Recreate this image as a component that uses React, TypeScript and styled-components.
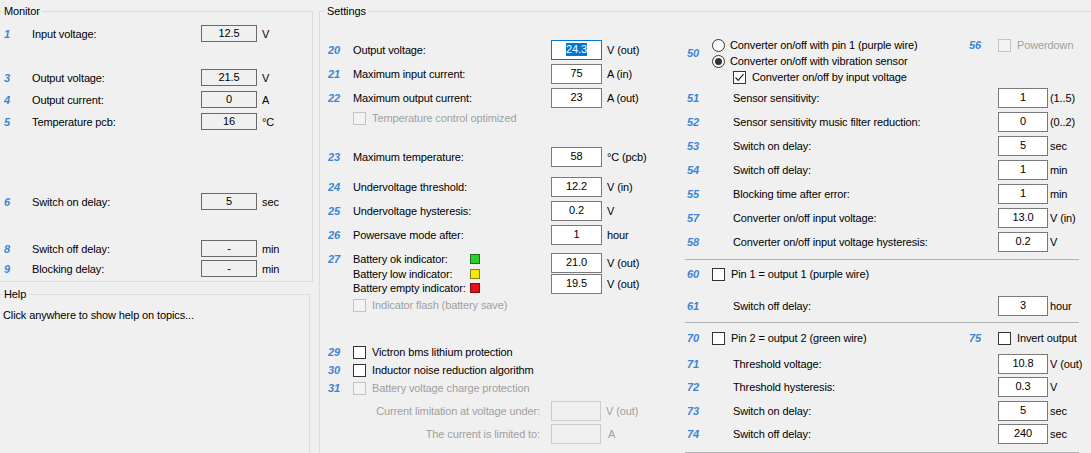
import React from 'react';
import styled, { createGlobalStyle } from 'styled-components';

const GlobalStyle = createGlobalStyle`
  html, body { margin: 0; padding: 0; background: #f0f0f0; }
  body {
    font-family: "Liberation Sans", Arial, sans-serif;
    font-size: 11px;
    letter-spacing: -0.12px;
    color: #000;
  }
  * { box-sizing: border-box; }
`;

const Page = styled.div`
  display: flex;
  width: 1091px;
  height: 453px;
  overflow: hidden;
  padding-top: 4px;
`;

const LeftColumn = styled.div`
  width: 313px;
  flex-shrink: 0;
  display: flex;
  flex-direction: column;
`;

const Group = styled.fieldset<{ $w: number; $h: number; $ml?: number; $mt?: number }>`
  margin: ${p => p.$mt ?? 0}px 0 0 ${p => p.$ml ?? 0}px;
  padding: 0;
  width: ${p => p.$w}px;
  height: ${p => p.$h}px;
  min-width: 0;
  flex-shrink: 0;
  border: 1px solid #dcdcdc;
`;

const Legend = styled.legend`
  margin-left: 5px;
  padding: 0 2px;
  line-height: 14px;
  font-size: 11px;
`;

const MonitorBody = styled.div`
  padding-left: 7px;
`;

const HelpBody = styled.div`
  padding: 7px 0 0 6px;
  line-height: 14px;
`;

const SettingsBody = styled.div`
  display: flex;
`;

const MiddleColumn = styled.div`
  width: 360px;
  flex-shrink: 0;
  display: flex;
  flex-direction: column;
`;

const RightColumn = styled.div`
  width: 400px;
  flex-shrink: 0;
  display: flex;
  flex-direction: column;
`;

const Num = styled.span`
  font-weight: bold;
  font-style: italic;
  font-size: 11px;
  letter-spacing: 0;
  color: #3a86d4;
  white-space: nowrap;
`;

const Text = styled.span<{ $disabled?: boolean; $indent?: number; $right?: boolean }>`
  color: ${p => (p.$disabled ? '#a0a0a0' : '#000')};
  white-space: nowrap;
  padding-left: ${p => p.$indent ?? 0}px;
  padding-right: ${p => (p.$right ? 11 : 0)}px;
  text-align: ${p => (p.$right ? 'right' : 'left')};
`;

const Unit = styled.span<{ $gap: number; $disabled?: boolean }>`
  margin-left: ${p => p.$gap}px;
  color: ${p => (p.$disabled ? '#a0a0a0' : '#000')};
  white-space: nowrap;
`;

const FieldRow = styled.div<{
  $numW: number;
  $labelW: number;
  $fieldW: number;
  $h: number;
  $pad: number;
  $mt: number;
}>`
  display: grid;
  grid-template-columns: ${p => `${p.$numW}px ${p.$labelW}px ${p.$fieldW}px auto`};
  align-items: center;
  height: ${p => p.$h}px;
  padding-left: ${p => p.$pad}px;
  margin-top: ${p => p.$mt}px;
  flex-shrink: 0;
`;

type FieldKind = 'monitor' | 'edit' | 'focus' | 'disabled';

const borderColors: Record<FieldKind, string> = {
  monitor: '#6a6a6a',
  edit: '#7a7a7a',
  focus: '#0078d7',
  disabled: '#cccccc',
};

const FieldBox = styled.div<{ $kind: FieldKind; $h: number }>`
  height: ${p => p.$h}px;
  line-height: ${p => p.$h - 3}px;
  border: 1px solid ${p => borderColors[p.$kind]};
  background: ${p => (p.$kind === 'monitor' || p.$kind === 'disabled' ? '#f0f0f0' : '#ffffff')};
  text-align: center;
  white-space: nowrap;
  overflow: hidden;
`;

const Selection = styled.span`
  display: inline-block;
  line-height: 13px;
  background: #0078d7;
  color: #fff;
`;

const CheckRow = styled.div<{ $pad: number; $mt: number }>`
  display: grid;
  grid-template-columns: 25px auto;
  align-items: center;
  height: 14px;
  padding-left: ${p => p.$pad}px;
  margin-top: ${p => p.$mt}px;
  flex-shrink: 0;
`;

const SplitRow = styled.div<{ $mt: number }>`
  display: grid;
  grid-template-columns: 25px 257px 29px auto;
  align-items: center;
  height: 14px;
  padding-left: 7px;
  margin-top: ${p => p.$mt}px;
  flex-shrink: 0;
`;

const Option = styled.label<{ $gap: number; $indent?: number }>`
  display: flex;
  align-items: center;
  gap: ${p => p.$gap}px;
  padding-left: ${p => p.$indent ?? 0}px;
  white-space: nowrap;
`;

const Box = styled.span<{ $disabled?: boolean }>`
  width: 13px;
  height: 13px;
  flex-shrink: 0;
  display: inline-flex;
  align-items: center;
  justify-content: center;
  border: 1px solid ${p => (p.$disabled ? '#c4c4c4' : '#333333')};
  background: ${p => (p.$disabled ? '#f3f3f3' : '#ffffff')};
`;

const RadioCircle = styled.span<{ $on?: boolean }>`
  width: 13px;
  height: 13px;
  flex-shrink: 0;
  border-radius: 50%;
  border: 1px solid #333333;
  background: #fff;
  display: inline-flex;
  align-items: center;
  justify-content: center;
  &::after {
    content: '';
    width: 7px;
    height: 7px;
    border-radius: 50%;
    background: ${p => (p.$on ? '#333333' : 'transparent')};
  }
`;

const RadioBlock = styled.div<{ $mt: number }>`
  display: grid;
  grid-template-columns: 25px auto;
  grid-template-rows: 16px 16px 16px;
  align-items: center;
  padding-left: 7px;
  margin-top: ${p => p.$mt}px;
  flex-shrink: 0;
  & > :not(:first-child) {
    grid-column: 2;
  }
`;

const SpanNum = styled(Num)`
  grid-column: 1;
  grid-row: 1 / span 2;
  align-self: center;
`;

const RadioLine = styled.div`
  display: grid;
  grid-template-columns: 257px 29px auto;
  align-items: center;
`;

const BatteryBlock = styled.div<{ $mt: number }>`
  display: grid;
  grid-template-columns: 25px 198px auto;
  align-items: start;
  height: 44px;
  padding-left: 8px;
  margin-top: ${p => p.$mt}px;
  flex-shrink: 0;
`;

const BlockNum = styled(Num)`
  line-height: 14.5px;
`;

const IndicatorList = styled.div`
  display: flex;
  flex-direction: column;
`;

const IndicatorLine = styled.div`
  display: grid;
  grid-template-columns: 117px 10px;
  align-items: center;
  height: 14.5px;
`;

const Lamp = styled.span<{ $fill: string; $edge: string }>`
  width: 10px;
  height: 10px;
  background: ${p => p.$fill};
  border: 1px solid ${p => p.$edge};
`;

const FieldStack = styled.div`
  display: flex;
  flex-direction: column;
  gap: 1px;
  padding-top: 1px;
`;

const FieldLine = styled.div`
  display: grid;
  grid-template-columns: 51px auto;
  align-items: center;
`;

const Separator = styled.div<{ $mt: number }>`
  margin: ${p => p.$mt}px 0 0 5px;
  width: 394px;
  height: 1px;
  background: #b4b4b4;
  flex-shrink: 0;
`;

const CheckMark = () => (
  <svg width="11" height="11" viewBox="0 0 11 11">
    <polyline points="1.5,5.5 4.2,8.3 9.5,2.2" fill="none" stroke="#222" strokeWidth="1.2" />
  </svg>
);

const CheckBox = ({ checked, disabled }: { checked?: boolean; disabled?: boolean }) => (
  <Box $disabled={disabled}>{checked ? <CheckMark /> : null}</Box>
);

const monitorRows = [
  { n: '1', label: 'Input voltage:', value: '12.5', unit: 'V', mt: 7 },
  { n: '3', label: 'Output voltage:', value: '21.5', unit: 'V', mt: 27 },
  { n: '4', label: 'Output current:', value: '0', unit: 'A', mt: 5 },
  { n: '5', label: 'Temperature pcb:', value: '16', unit: '°C', mt: 5 },
  { n: '6', label: 'Switch on delay:', value: '5', unit: 'sec', mt: 63 },
  { n: '8', label: 'Switch off delay:', value: '-', unit: 'min', mt: 30 },
  { n: '9', label: 'Blocking delay:', value: '-', unit: 'min', mt: 3 },
];

const midRows = [
  { n: '21', label: 'Maximum input current:', value: '75', unit: 'A (in)', mt: 4 },
  { n: '22', label: 'Maximum output current:', value: '23', unit: 'A (out)', mt: 4 },
];

const midRows2 = [
  { n: '23', label: 'Maximum temperature:', value: '58', unit: '°C (pcb)', mt: 22 },
  { n: '24', label: 'Undervoltage threshold:', value: '12.2', unit: 'V (in)', mt: 10 },
  { n: '25', label: 'Undervoltage hysteresis:', value: '0.2', unit: 'V', mt: 4 },
  { n: '26', label: 'Powersave mode after:', value: '1', unit: 'hour', mt: 4 },
];

const rightRows = [
  { n: '51', label: 'Sensor sensitivity:', value: '1', unit: '(1..5)', mt: 3 },
  { n: '52', label: 'Sensor sensitivity music filter reduction:', value: '0', unit: '(0..2)', mt: 4 },
  { n: '53', label: 'Switch on delay:', value: '5', unit: 'sec', mt: 4 },
  { n: '54', label: 'Switch off delay:', value: '1', unit: 'min', mt: 4 },
  { n: '55', label: 'Blocking time after error:', value: '1', unit: 'min', mt: 4 },
  { n: '57', label: 'Converter on/off input voltage:', value: '13.0', unit: 'V (in)', mt: 4 },
  { n: '58', label: 'Converter on/off input voltage hysteresis:', value: '0.2', unit: 'V', mt: 4 },
];

const pin2Rows = [
  { n: '71', label: 'Threshold voltage:', value: '10.8', unit: 'V (out)', mt: 9 },
  { n: '72', label: 'Threshold hysteresis:', value: '0.3', unit: 'V', mt: 3 },
  { n: '73', label: 'Switch on delay:', value: '5', unit: 'sec', mt: 4 },
  { n: '74', label: 'Switch off delay:', value: '240', unit: 'sec', mt: 3 },
];

type RowData = { n: string; label: string; value: string; unit: string; mt: number };

const MidRow = ({ r, kind = 'edit' }: { r: RowData; kind?: FieldKind }) => (
  <FieldRow $numW={25} $labelW={198} $fieldW={51} $h={20} $pad={8} $mt={r.mt}>
    <Num>{r.n}</Num>
    <Text>{r.label}</Text>
    <FieldBox $kind={kind} $h={20}>
      {kind === 'focus' ? <Selection>{r.value}</Selection> : r.value}
    </FieldBox>
    <Unit $gap={5}>{r.unit}</Unit>
  </FieldRow>
);

const RightRow = ({ r }: { r: RowData }) => (
  <FieldRow $numW={25} $labelW={286} $fieldW={50} $h={20} $pad={7} $mt={r.mt}>
    <Num>{r.n}</Num>
    <Text $indent={21}>{r.label}</Text>
    <FieldBox $kind="edit" $h={20}>{r.value}</FieldBox>
    <Unit $gap={2}>{r.unit}</Unit>
  </FieldRow>
);

export default function App() {
  return (
    <>
      <GlobalStyle />
      <Page>
        <LeftColumn>
          <Group $w={317} $h={278} $ml={-4}>
            <Legend>Monitor</Legend>
            <MonitorBody>
              {monitorRows.map(r => (
                <FieldRow key={r.n} $numW={28} $labelW={169} $fieldW={56} $h={17} $pad={0} $mt={r.mt}>
                  <Num>{r.n}</Num>
                  <Text>{r.label}</Text>
                  <FieldBox $kind="monitor" $h={17}>{r.value}</FieldBox>
                  <Unit $gap={5}>{r.unit}</Unit>
                </FieldRow>
              ))}
            </MonitorBody>
          </Group>
          <Group $w={314} $h={200} $ml={-4} $mt={5}>
            <Legend>Help</Legend>
            <HelpBody>Click anywhere to show help on topics...</HelpBody>
          </Group>
        </LeftColumn>

        <Group $w={800} $h={470} $ml={6}>
          <Legend>Settings</Legend>
          <SettingsBody>
            <MiddleColumn>
              <MidRow r={{ n: '20', label: 'Output voltage:', value: '24.3', unit: 'V (out)', mt: 22 }} kind="focus" />
              {midRows.map(r => <MidRow key={r.n} r={r} />)}
              <CheckRow $pad={8} $mt={3}>
                <span />
                <Option $gap={6}>
                  <CheckBox disabled />
                  <Text $disabled>Temperature control optimized</Text>
                </Option>
              </CheckRow>
              {midRows2.map(r => <MidRow key={r.n} r={r} />)}
              <BatteryBlock $mt={7}>
                <BlockNum>27</BlockNum>
                <IndicatorList>
                  <IndicatorLine>
                    <Text>Battery ok indicator:</Text>
                    <Lamp $fill="#28d028" $edge="#1b6e1b" />
                  </IndicatorLine>
                  <IndicatorLine>
                    <Text>Battery low indicator:</Text>
                    <Lamp $fill="#f4ea10" $edge="#8a8010" />
                  </IndicatorLine>
                  <IndicatorLine>
                    <Text>Battery empty indicator:</Text>
                    <Lamp $fill="#e01414" $edge="#7a1010" />
                  </IndicatorLine>
                </IndicatorList>
                <FieldStack>
                  <FieldLine>
                    <FieldBox $kind="edit" $h={20}>21.0</FieldBox>
                    <Unit $gap={5}>V (out)</Unit>
                  </FieldLine>
                  <FieldLine>
                    <FieldBox $kind="edit" $h={20}>19.5</FieldBox>
                    <Unit $gap={5}>V (out)</Unit>
                  </FieldLine>
                </FieldStack>
              </BatteryBlock>
              <CheckRow $pad={8} $mt={2}>
                <span />
                <Option $gap={6}>
                  <CheckBox disabled />
                  <Text $disabled>Indicator flash (battery save)</Text>
                </Option>
              </CheckRow>
              <CheckRow $pad={8} $mt={33}>
                <Num>29</Num>
                <Option $gap={6}>
                  <CheckBox />
                  <Text>Victron bms lithium protection</Text>
                </Option>
              </CheckRow>
              <CheckRow $pad={8} $mt={4}>
                <Num>30</Num>
                <Option $gap={6}>
                  <CheckBox />
                  <Text>Inductor noise reduction algorithm</Text>
                </Option>
              </CheckRow>
              <CheckRow $pad={8} $mt={4}>
                <Num>31</Num>
                <Option $gap={6}>
                  <CheckBox disabled />
                  <Text $disabled>Battery voltage charge protection</Text>
                </Option>
              </CheckRow>
              <FieldRow $numW={25} $labelW={198} $fieldW={50} $h={20} $pad={8} $mt={6}>
                <span />
                <Text $disabled $right>Current limitation at voltage under:</Text>
                <FieldBox $kind="disabled" $h={20} />
                <Unit $gap={5} $disabled>V (out)</Unit>
              </FieldRow>
              <FieldRow $numW={25} $labelW={198} $fieldW={50} $h={20} $pad={8} $mt={3}>
                <span />
                <Text $disabled $right>The current is limited to:</Text>
                <FieldBox $kind="disabled" $h={20} />
                <Unit $gap={7} $disabled>A</Unit>
              </FieldRow>
            </MiddleColumn>

            <RightColumn>
              <RadioBlock $mt={19}>
                <SpanNum>50</SpanNum>
                <RadioLine>
                  <Option $gap={5}>
                    <RadioCircle />
                    <Text>Converter on/off with pin 1 (purple wire)</Text>
                  </Option>
                  <Num>56</Num>
                  <Option $gap={6}>
                    <CheckBox disabled />
                    <Text $disabled>Powerdown</Text>
                  </Option>
                </RadioLine>
                <Option $gap={5}>
                  <RadioCircle $on />
                  <Text>Converter on/off with vibration sensor</Text>
                </Option>
                <Option $gap={6} $indent={21}>
                  <CheckBox checked />
                  <Text>Converter on/off by input voltage</Text>
                </Option>
              </RadioBlock>
              {rightRows.map(r => <RightRow key={r.n} r={r} />)}
              <Separator $mt={7} />
              <CheckRow $pad={7} $mt={7}>
                <Num>60</Num>
                <Option $gap={6}>
                  <CheckBox />
                  <Text>Pin 1 = output 1 (purple wire)</Text>
                </Option>
              </CheckRow>
              <RightRow r={{ n: '61', label: 'Switch off delay:', value: '3', unit: 'hour', mt: 15 }} />
              <Separator $mt={6} />
              <SplitRow $mt={8}>
                <Num>70</Num>
                <Option $gap={6}>
                  <CheckBox />
                  <Text>Pin 2 = output 2 (green wire)</Text>
                </Option>
                <Num>75</Num>
                <Option $gap={6}>
                  <CheckBox />
                  <Text>Invert output</Text>
                </Option>
              </SplitRow>
              {pin2Rows.map(r => <RightRow key={r.n} r={r} />)}
              <Separator $mt={8} />
            </RightColumn>
          </SettingsBody>
        </Group>
      </Page>
    </>
  );
}
